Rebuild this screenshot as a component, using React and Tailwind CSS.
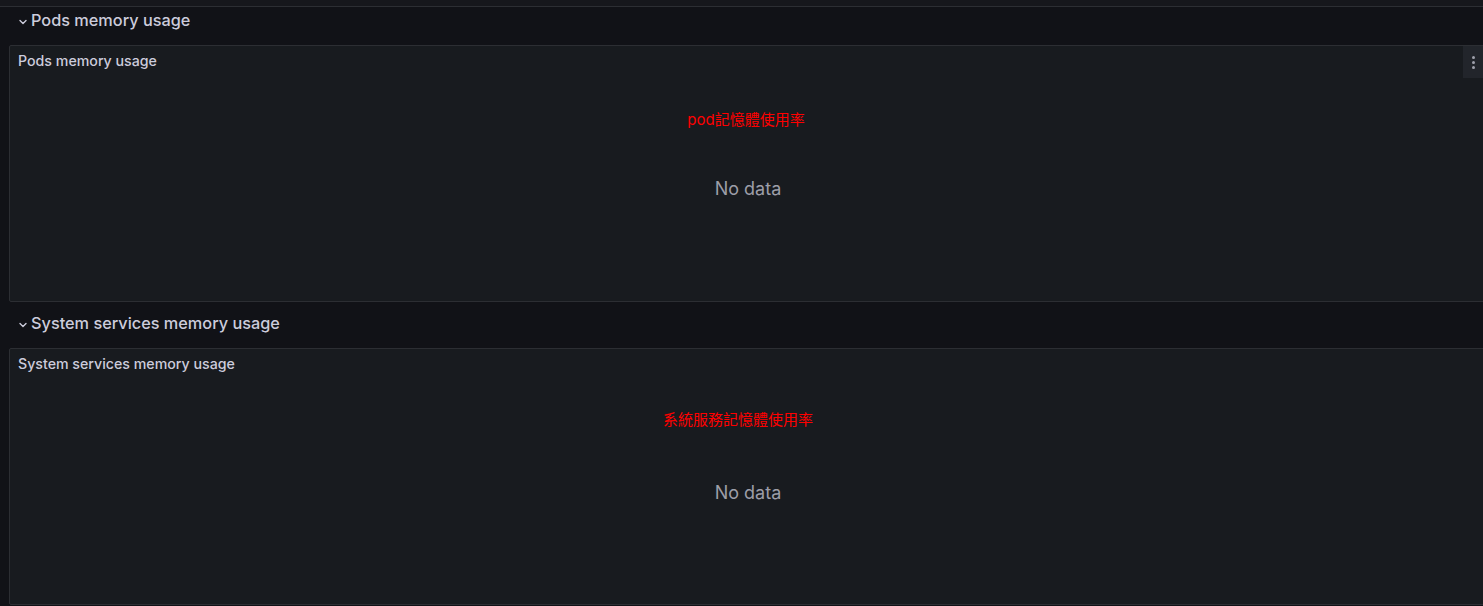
import React from 'react';

const font = { fontFamily: 'Inter, "Noto Sans CJK TC", sans-serif' };

function RowHeader({ title }) {
  return (
    <div className="flex h-[38px] items-center pl-[18px] pb-[11px]">
      <svg width="10" height="10" viewBox="0 0 10 10" className="mr-[3px] mt-[3px] text-[#ccccdc]">
        <path d="M2 3.5 L5 6.5 L8 3.5" fill="none" stroke="currentColor" strokeWidth="1.4" strokeLinecap="round" strokeLinejoin="round" />
      </svg>
      <span className="text-[16.3px] font-medium text-[#ccccdc]">{title}</span>
    </div>
  );
}

function Panel({ title, note, noteTop, dataTop, showMenu }) {
  return (
    <div className="ml-[9px] w-[1478px] h-[257px] shrink-0 rounded-[2px] border border-[#2c2e33] bg-[#181b1f] flex flex-col relative">
      <div className="h-[32px] flex items-center px-[8px] pb-[2px]">
        <span className="text-[14.2px] font-medium text-[#ccccdc]">{title}</span>
      </div>
      {showMenu && (
        <div className="absolute right-[3px] top-0 h-[32px] w-[20px] bg-[#22252b] flex flex-col items-center justify-center gap-[2px]">
          <span className="block w-[3px] h-[3px] rounded-full bg-[#9fa0ab]" />
          <span className="block w-[3px] h-[3px] rounded-full bg-[#9fa0ab]" />
          <span className="block w-[3px] h-[3px] rounded-full bg-[#9fa0ab]" />
        </div>
      )}
      <div className={`h-[20px] leading-[20px] text-center text-[15px] text-[#ff0000] ${noteTop}`}>{note}</div>
      <div className={`flex justify-center ${dataTop}`}>
        <span className="text-[18px] leading-[27px] text-[#9d9ea8]">No data</span>
      </div>
    </div>
  );
}

export default function App() {
  return (
    <div className="w-[1483px] h-[606px] overflow-hidden bg-[#111217]" style={font}>
      <div className="h-[7px] border-b border-[#2c2e33] bg-[#16171c]" />
      <RowHeader title="Pods memory usage" />
      <Panel title="Pods memory usage" note="pod記憶體使用率" noteTop="mt-[32px] pr-[4px]" dataTop="mt-[45px]" showMenu />
      <div className="h-[8px]" />
      <RowHeader title="System services memory usage" />
      <Panel title="System services memory usage" note="系統服務記憶體使用率" noteTop="mt-[29px] pr-[20px]" dataTop="mt-[49px]" />
    </div>
  );
}
